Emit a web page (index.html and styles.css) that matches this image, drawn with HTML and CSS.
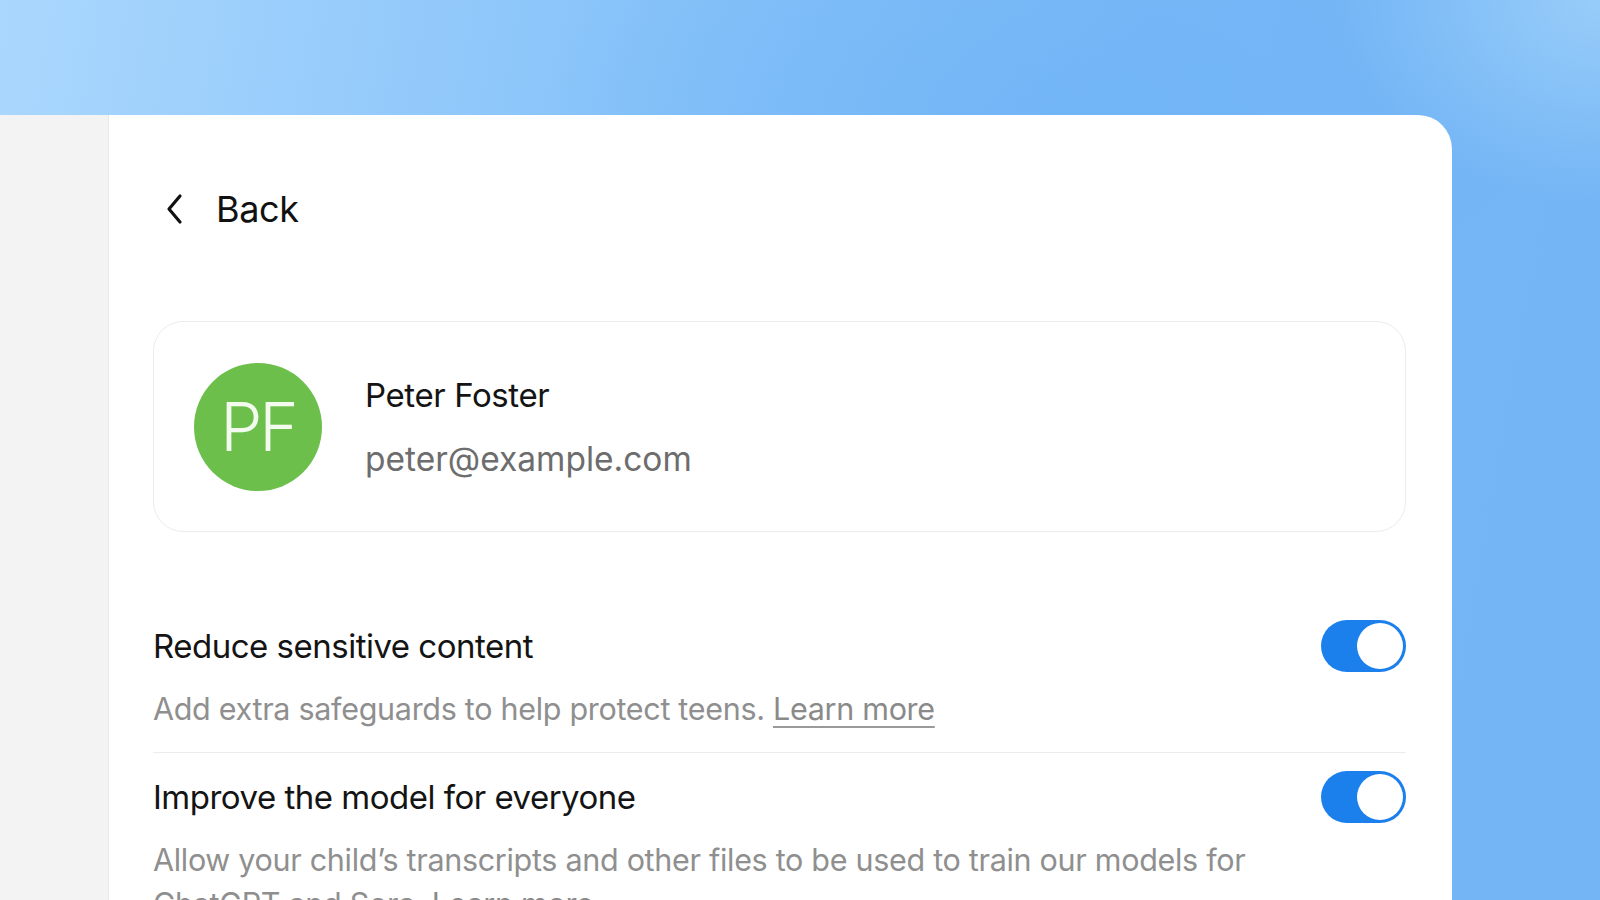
FILE: index.html
```html
<!DOCTYPE html>
<html lang="en">
  <head>
    <meta charset="UTF-8" />
    <meta name="viewport" content="width=device-width, initial-scale=1.0" />
    <title>Parental controls</title>
    <link rel="stylesheet" href="styles.css">
  </head>
  <body>
    <div class="window">
      <aside class="sidebar"></aside>

      <main class="panel">
        <a class="back" href="#">
          <svg class="back-icon" width="26" height="34" viewBox="0 0 26 34" aria-hidden="true">
            <path d="M18 4 L7 17 L18 30" fill="none" stroke="#111" stroke-width="3.2" stroke-linecap="round" stroke-linejoin="round" />
          </svg>
          <span>Back</span>
        </a>

        <section class="profile">
          <div class="avatar">PF</div>
          <div class="profile-info">
            <div class="profile-name">Peter Foster</div>
            <div class="profile-email">peter@example.com</div>
          </div>
        </section>

        <section class="settings">
          <div class="setting">
            <div class="setting-head">
              <span class="setting-title">Reduce sensitive content</span>
              <span class="toggle on"><span class="knob"></span></span>
            </div>
            <p class="setting-desc">
              Add extra safeguards to help protect teens. <a href="#">Learn more</a>
            </p>
          </div>

          <div class="setting">
            <div class="setting-head">
              <span class="setting-title">Improve the model for everyone</span>
              <span class="toggle on"><span class="knob"></span></span>
            </div>
            <p class="setting-desc">
              Allow your child’s transcripts and other files to be used to train our models for
              ChatGPT and Sora. <a href="#">Learn more</a>
            </p>
          </div>
        </section>
      </main>
    </div>
  </body>
</html>
```

FILE: styles.css
```css
body {
  margin: 0;
  height: 900px;
  overflow: hidden;
  font-family: Inter, "Noto Sans", sans-serif;
  color: #151515;
  background:
    radial-gradient(ellipse 260px 200px at 1600px 0, rgba(160, 210, 250, 0.8), rgba(160, 210, 250, 0)),
    radial-gradient(ellipse 520px 240px at 1060px 110px, rgba(112, 180, 246, 0.7), rgba(112, 180, 246, 0)),
    linear-gradient(100deg, #aad7fd 0%, #86c2f9 38%, #76b7f6 66%, #74b5f5 100%);
}

.window {
  display: flex;
  width: 1452px;
  height: 785px;
  margin-top: 115px;
  border-top-right-radius: 34px;
  overflow: hidden;
}

.sidebar {
  width: 108px;
  flex-shrink: 0;
  background: #f3f3f3;
  border-right: 1px solid #e9e9e9;
}

.panel {
  flex: 1;
  background: #fff;
  padding: 69px 46px 0 44px;
}

.back {
  display: flex;
  align-items: center;
  gap: 28px;
  height: 50px;
  color: #111;
  text-decoration: none;
  font-size: 36px;
  letter-spacing: -0.4px;
  padding-left: 9px;
}

.back-icon {
  flex-shrink: 0;
}

/* profile card */
.profile {
  display: flex;
  align-items: center;
  gap: 43px;
  height: 211px;
  box-sizing: border-box;
  margin-top: 87px;
  padding: 0 40px;
  border: 1.5px solid #ececec;
  border-radius: 30px;
}

.avatar {
  width: 128px;
  height: 128px;
  flex-shrink: 0;
  border-radius: 50%;
  background: #6cbf4b;
  color: #f3faee;
  display: flex;
  align-items: center;
  justify-content: center;
  font-size: 67px;
  font-weight: 300;
  letter-spacing: -3px;
}

.profile-info {
  display: flex;
  flex-direction: column;
  gap: 22px;
}

.profile-name {
  font-size: 33px;
  line-height: 42px;
  letter-spacing: -0.4px;
  color: #141414;
}

.profile-email {
  font-size: 33.5px;
  line-height: 42px;
  color: #6d6d6d;
}

/* settings list */
.settings {
  margin-top: 70px;
}

.setting {
  padding: 18px 0 21px;
  border-bottom: 1px solid #ececec;
}

.setting:last-child {
  border-bottom: none;
}

.setting-head {
  display: flex;
  align-items: center;
  justify-content: space-between;
  height: 52px;
}

.setting-title {
  font-size: 33px;
  letter-spacing: -0.5px;
  color: #141414;
}

.setting-desc {
  margin: 15px 0 0;
  font-size: 30.5px;
  line-height: 44px;
  letter-spacing: -0.3px;
  color: #8f8f8f;
  max-width: 1130px;
}

.setting-desc a {
  color: #8a8a8a;
  text-decoration: underline;
  text-decoration-color: #9a9a9a;
  text-underline-offset: 6px;
  text-decoration-thickness: 2px;
}

.toggle {
  position: relative;
  width: 85px;
  height: 52px;
  border-radius: 26px;
  background: #1b80ec;
}

.knob {
  position: absolute;
  top: 3px;
  right: 3px;
  width: 46px;
  height: 46px;
  border-radius: 50%;
  background: #fff;
}
```
